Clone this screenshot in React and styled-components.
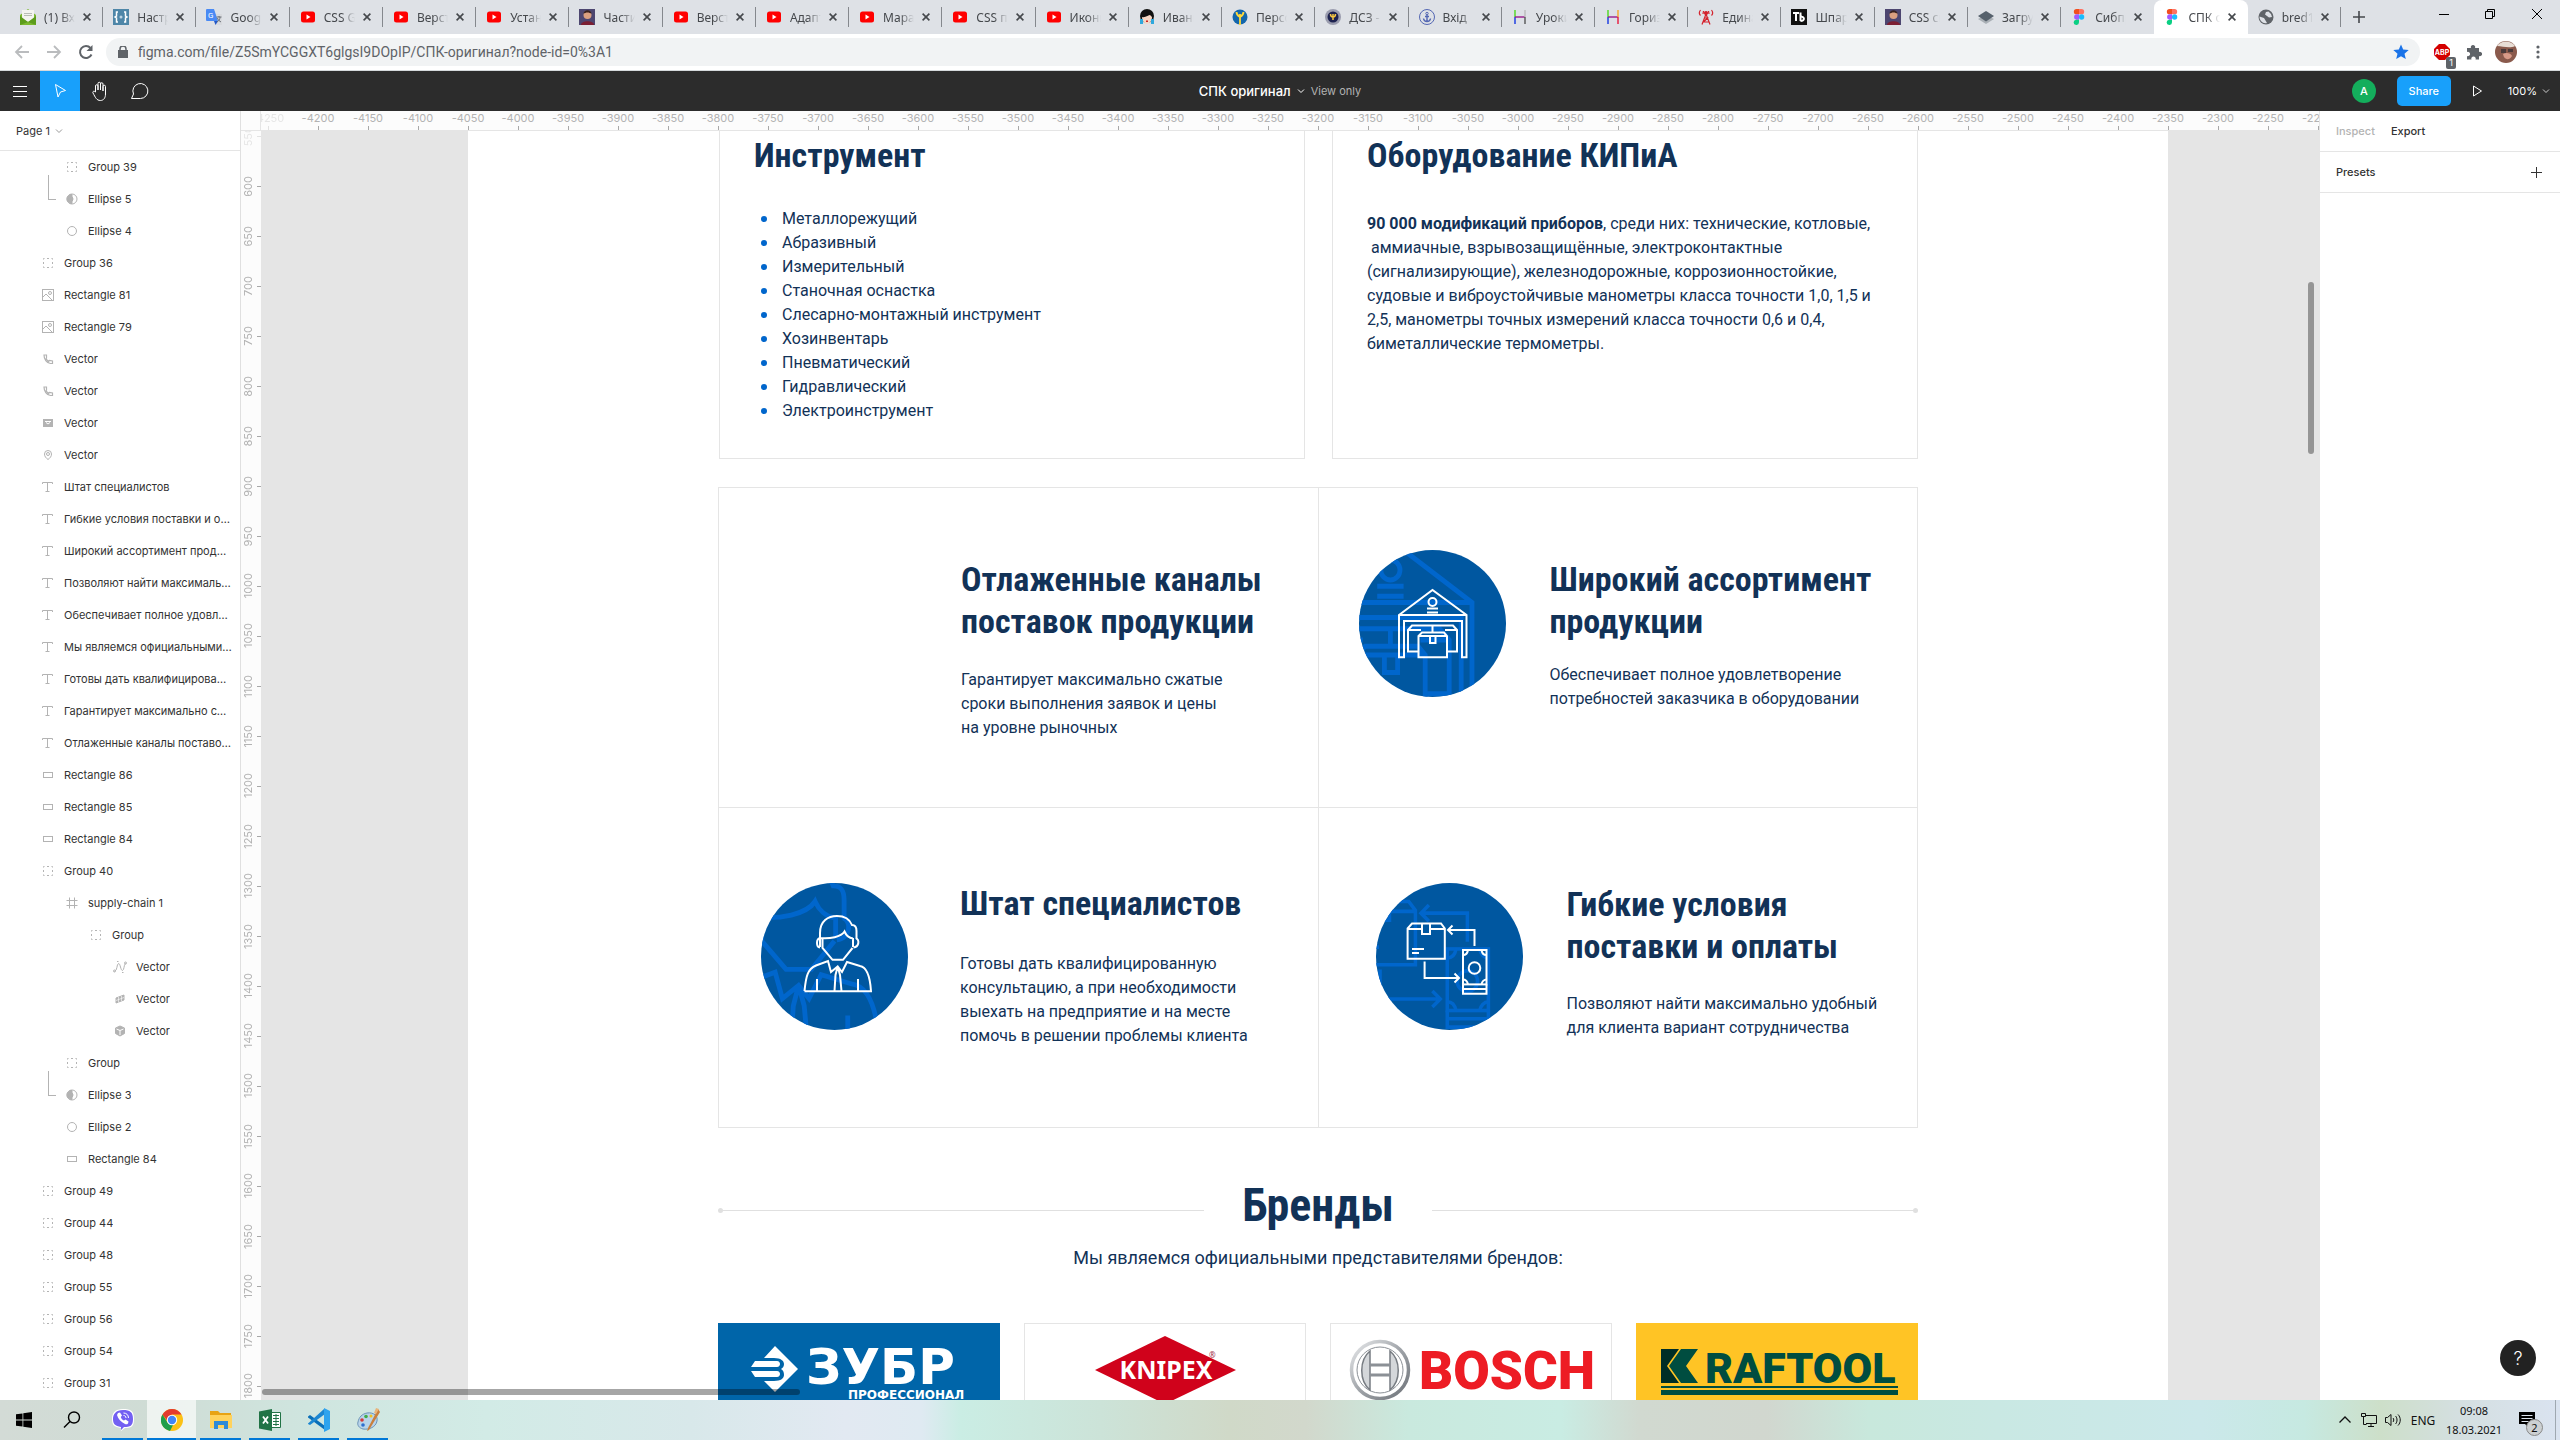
import React from "react";
import styled, { createGlobalStyle, css } from "styled-components";

const NAVY = "#123257";
const LINE = "#e5e5e5";

const Global = createGlobalStyle`
  *, *::before, *::after { box-sizing: border-box; }
  body { margin: 0; font-family: Inter, "Noto Sans", sans-serif; font-size: 11px; color: #333; background: #fff; }
  button { font: inherit; color: inherit; border: 0; padding: 0; background: none; }
  h1, h2, h3, p, ul { margin: 0; padding: 0; }
  a { color: inherit; text-decoration: none; }
  svg { display: block; flex: none; }
`;

const Page = styled.div`
  display: flex;
  flex-direction: column;
  height: 100vh;
  overflow: hidden;
`;

/* ---------- browser chrome ---------- */

const TabStrip = styled.header`
  display: flex;
  height: 34px;
  padding-left: 10px;
  background: #dee1e6;
  font-family: "Noto Sans", "Open Sans", sans-serif;
  font-size: 12px;
  color: #45484c;
`;

const TabList = styled.div`
  display: flex;
  flex: 1;
  min-width: 0;
`;

const Tab = styled.div`
  display: flex;
  align-items: center;
  flex: 1;
  min-width: 0;
  padding: 0 10px;
  position: relative;
  &::after {
    content: "";
    position: absolute;
    right: 0;
    top: 7px;
    height: 20px;
    width: 1px;
    background: ${(p) => (p.$divider ? "#85888d" : "transparent")};
  }
  ${(p) =>
    p.$active &&
    css`
      background: #fff;
      border-radius: 8px 8px 0 0;
    `}
`;

const TabTitle = styled.span`
  flex: 1;
  min-width: 0;
  margin: 0 6px 0 8px;
  overflow: hidden;
  white-space: nowrap;
  mask-image: linear-gradient(to right, #000 55%, transparent 100%);
`;

const IconButton = styled.button`
  display: grid;
  place-items: center;
  flex: none;
  width: ${(p) => p.$w || 32}px;
  height: ${(p) => p.$h || 32}px;
`;

const WindowButtons = styled.div`
  display: flex;
  margin-left: 44px;
`;

const AddressRow = styled.div`
  display: flex;
  align-items: center;
  height: 37px;
  padding: 0 6px;
  background: #fff;
  border-bottom: 1px solid #d5d9dc;
`;

const AddressBar = styled.div`
  display: flex;
  align-items: center;
  flex: 1;
  height: 28px;
  margin: 0 6px 0 4px;
  padding: 0 11px 0 12px;
  border-radius: 14px;
  background: #f1f3f4;
  gap: 10px;
`;

const Address = styled.input`
  flex: 1;
  border: 0;
  padding: 0;
  background: none;
  outline: none;
  font: 14px Roboto, "Noto Sans", sans-serif;
  color: #5f6368;
`;

const ExtensionBadge = styled.span`
  position: absolute;
  right: 2px;
  bottom: -1px;
  padding: 0 3px;
  border-radius: 2px;
  background: #5f6368;
  color: #fff;
  font-size: 9px;
  line-height: 12px;
`;

const Extension = styled(IconButton)`
  position: relative;
`;

/* ---------- editor toolbar ---------- */

const Toolbar = styled.div`
  display: grid;
  grid-template-columns: 1fr auto 1fr;
  align-items: center;
  height: 40px;
  background: #2c2c2c;
  color: #fff;
`;

const Tools = styled.div`
  display: flex;
`;

const Tool = styled(IconButton)`
  background: ${(p) => (p.$active ? "#18a0fb" : "none")};
`;

const FileTitle = styled.div`
  display: flex;
  align-items: center;
  gap: 6px;
  font-size: 13px;
  font-weight: 500;
  small {
    font-size: 11px;
    font-weight: 400;
    color: #b3b3b3;
  }
`;

const ToolbarEnd = styled.div`
  display: flex;
  align-items: center;
  justify-content: flex-end;
  padding-right: 10px;
`;

const Avatar = styled.span`
  width: 24px;
  height: 24px;
  margin-right: 21px;
  border-radius: 50%;
  background: #14ae5c;
  font-weight: 500;
  line-height: 24px;
  text-align: center;
`;

const ShareButton = styled.button`
  width: 54px;
  height: 30px;
  margin-right: 11px;
  border-radius: 5px;
  background: #18a0fb;
  font-weight: 500;
`;

const ZoomButton = styled.button`
  display: flex;
  align-items: center;
  gap: 5px;
  margin-left: 14px;
`;

/* ---------- side panels ---------- */

const Workspace = styled.div`
  display: flex;
  flex: 1;
  min-height: 0;
`;

const LeftPanel = styled.aside`
  flex: 0 0 241px;
  overflow: hidden;
  border-right: 1px solid #e0e0e0;
`;

const PanelRow = styled.div`
  display: flex;
  align-items: center;
  gap: 16px;
  height: ${(p) => p.$h || 40}px;
  padding: 0 16px;
  border-bottom: 1px solid ${LINE};
`;

const PageButton = styled.button`
  display: flex;
  align-items: center;
  gap: 5px;
`;

const PanelTab = styled.button`
  font-weight: 500;
  color: ${(p) => (p.$muted ? "#b3b3b3" : "#333")};
`;

const Layer = styled.div`
  display: flex;
  align-items: center;
  gap: 8px;
  height: 32px;
  padding: 0 8px 0 ${(p) => 40 + p.$level * 24}px;
  position: relative;
  span {
    overflow: hidden;
    white-space: nowrap;
    text-overflow: ellipsis;
  }
  ${(p) =>
    p.$mask &&
    css`
      &::before {
        content: "";
        position: absolute;
        left: 48px;
        top: -8px;
        width: 8px;
        height: 25px;
        border: solid #b3b3b3;
        border-width: 0 0 1px 1px;
      }
    `}
`;

const RightPanel = styled.aside`
  flex: 0 0 241px;
  display: flex;
  flex-direction: column;
  border-left: 1px solid ${LINE};
  ${PanelRow} h2 {
    flex: 1;
    font-size: 11px;
    font-weight: 500;
  }
`;

const HelpButton = styled.button`
  width: 36px;
  height: 36px;
  margin: auto 24px 24px auto;
  border-radius: 50%;
  background: #222;
  color: #fff;
  font-size: 18px;
  font-weight: 300;
`;

/* ---------- canvas ---------- */

const CanvasColumn = styled.div`
  flex: 1;
  min-width: 0;
  display: grid;
  grid-template: 20px 1fr / 20px 1fr;
`;

const RulerCorner = styled.div`
  background: #fcfcfc;
  border: solid ${LINE};
  border-width: 0 1px 1px 0;
`;

const RulerX = styled.div`
  display: flex;
  overflow: hidden;
  background: #fcfcfc;
  border-bottom: 1px solid ${LINE};
  &::before { content: ""; flex: 0 0 auto; margin-left: -18px; }
`;

const RulerY = styled.div`
  display: flex;
  flex-direction: column;
  overflow: hidden;
  background: #fcfcfc;
  &::before { content: ""; flex: none; margin-top: -20px; }
`;

const MarkX = styled.div`
  flex: 0 0 50px;
  display: flex;
  flex-direction: column;
  align-items: center;
  justify-content: space-between;
  color: #b3b3b3;
  line-height: 15px;
  opacity: ${(p) => (p.$faded ? 0.3 : 1)};
  &::after { content: ""; width: 1px; height: 4px; background: #a8a8a8; }
`;

const MarkY = styled.div`
  flex: 0 0 50px;
  display: flex;
  align-items: center;
  justify-content: space-between;
  color: #b3b3b3;
  opacity: ${(p) => (p.$faded ? 0.3 : 1)};
  span { writing-mode: vertical-rl; transform: rotate(180deg); line-height: 15px; }
  &::after { content: ""; width: 4px; height: 1px; background: #a8a8a8; }
`;

const Canvas = styled.main`
  position: relative;
  overflow: hidden;
  background: #e5e5e5;
`;

const Artboard = styled.div`
  height: 100%;
  margin: 0 151px 0 207px;
  overflow: hidden;
  background: #fff;
  color: ${NAVY};
  font: 16px/24px Roboto, sans-serif;
`;

const Content = styled.div`
  width: 1200px;
  max-width: 100%;
  margin: 0 auto;
`;

const ScrollThumb = styled.div`
  position: absolute;
  border-radius: 3px;
  background: rgba(0, 0, 0, 0.35);
  ${(p) =>
    p.$vertical
      ? css`right: 5px; top: 151px; width: 6px; height: 172px;`
      : css`left: 1px; bottom: 5px; height: 6px; width: 538px;`}
`;

const Heading = styled.h3`
  font-family: "Roboto Condensed", "Liberation Sans Narrow", sans-serif;
  font-size: 34px;
  line-height: ${(p) => p.$lh || 42}px;
  font-weight: 700;
  white-space: nowrap;
`;

const CatalogRow = styled.section`
  display: grid;
  grid-template-columns: 1fr 1fr;
  gap: 27px;
  padding-left: 1px;
`;

const CatalogCard = styled.article`
  height: 328px;
  padding: 0 32px 0 34px;
  border: solid ${LINE};
  border-width: 0 1px 1px;
`;

const BulletList = styled.ul`
  margin: 28px 0 0 7px;
  list-style: none;
  li { display: flex; align-items: center; gap: 15px; }
  li::before { content: ""; width: 6px; height: 6px; border-radius: 50%; background: #0066cc; }
`;

const CardText = styled.p`
  margin-top: 33px;
  white-space: nowrap;
`;

const Features = styled.section`
  display: grid;
  grid-template-columns: 1fr 1fr;
  margin-top: 28px;
  border: solid ${LINE};
  border-width: 1px 0 0 1px;
`;

const Feature = styled.article`
  display: flex;
  align-items: flex-start;
  gap: ${(p) => p.$gap}px;
  height: 320px;
  padding: ${(p) => p.$top}px 0 0 ${(p) => p.$left}px;
  border: solid ${LINE};
  border-width: 0 1px 1px 0;
`;

const FeatureText = styled.div`
  padding-top: ${(p) => p.$top}px;
  white-space: nowrap;
  p { margin-top: ${(p) => p.$gap}px; }
`;

const Emblem = styled.div`
  flex: 0 0 147px;
  height: 147px;
`;

const BrandsHead = styled.div`
  display: flex;
  align-items: center;
  gap: 38px;
  margin-top: 41px;
`;

const BrandsTitle = styled(Heading)`
  font-size: 46px;
  line-height: 72px;
`;

const Rule = styled.div`
  flex: 1;
  display: flex;
  align-items: center;
  flex-direction: ${(p) => (p.$end ? "row-reverse" : "row")};
  margin-top: 10px;
  &::before { content: ""; width: 5px; height: 5px; border-radius: 50%; background: #e0e0e0; }
  &::after { content: ""; flex: 1; height: 1px; background: #e0e0e0; }
`;

const BrandsNote = styled.p`
  margin-top: 3px;
  font-size: 18px;
  line-height: 27px;
  text-align: center;
`;

const BrandRow = styled.div`
  display: grid;
  grid-template-columns: repeat(4, 1fr);
  gap: 24px;
  margin-top: 52px;
`;

const Brand = styled.div`
  height: 140px;
  background: ${(p) => p.$bg || "#fff"};
  border: 1px solid ${(p) => p.$bg || LINE};
`;

/* ---------- taskbar ---------- */

const Taskbar = styled.footer`
  display: flex;
  height: 40px;
  background: linear-gradient(to right,
    #d3dbd6 0%, #cfdcd5 6%, #cfe5df 12%, #d2ebe6 19%, #d8e8ea 27%, #e2e9f2 33%, #dfeaf2 36%, #caede4 37.5%,
    #cce3d8 43%, #d0d9c8 48%, #d2d8cc 51%, #c9e9de 55%, #c9ece3 61%, #d1d9d0 64%, #d1d7cf 69%, #c8e8dc 73%,
    #c9e8e3 78%, #cbe8ea 86%, #c6e9e1 90%, #cddfc9 93%, #d4dfe0 96%, #dae3f0 100%);
  color: #111;
  font-family: "Noto Sans", "Open Sans", sans-serif;
  font-size: 12px;
`;

const TaskButton = styled.button`
  display: grid;
  place-items: center;
  width: ${(p) => (p.$running ? 49 : 48)}px;
  height: 40px;
  position: relative;
  background: ${(p) => (p.$current ? "rgba(255,255,255,0.65)" : "none")};
  &::after {
    content: "";
    position: absolute;
    bottom: 0;
    left: ${(p) => (p.$current ? 0 : 4)}px;
    right: ${(p) => (p.$current ? 0 : 4)}px;
    height: 2px;
    background: ${(p) => (p.$running ? "#0078d7" : "transparent")};
  }
`;

const TaskGroup = styled.div`
  display: flex;
  padding-left: ${(p) => p.$pad || 0}px;
`;

const Tray = styled.div`
  display: flex;
  align-items: center;
  margin-left: auto;
`;

const Clock = styled.time`
  width: 66px;
  font-size: 11px;
  line-height: 19px;
  text-align: center;
  white-space: pre-line;
`;

const Notices = styled.button`
  position: relative;
  width: 38px;
  height: 40px;
  margin: 0 9px 0 1px;
  display: grid;
  place-items: center;
`;

const NoticeCount = styled.span`
  position: absolute;
  left: 18px;
  top: 19px;
  width: 17px;
  height: 17px;
  border: 1px solid #888;
  border-radius: 50%;
  background: #ccd0d2;
  font-size: 11px;
  line-height: 15px;
`;

const DesktopEdge = styled.div`
  width: 5px;
  height: 40px;
  border-left: 1px solid #9fa8b0;
`;

/* ---------- icons ---------- */

const Svg = ({ w = 16, h, vb, stroke = "currentColor", sw = 1, fill = "none", children }) => (
  <svg width={w} height={h || w} viewBox={vb || `0 0 ${w} ${h || w}`} stroke={stroke} strokeWidth={sw} fill={fill} aria-hidden="true">
    {children}
  </svg>
);

const Chevron = ({ color = "#999" }) => (
  <Svg w={8} stroke={color}><path d="M1 2.500 4 5.500 7 2.500" /></Svg>
);

const Cross = ({ size = 8, sw = 1.6 }) => (
  <Svg w={size} vb="0 0 8 8" sw={sw}><path d="M.6.6 7.400 7.400M7.400.6.6 7.400" /></Svg>
);

const FAVICONS = {
  mail: (
    <g stroke="none"><path fill="#7cb82f" d="M0 6 8 0l8 6v10H0z" /><path fill="#f4f4f0" d="M2 1h12v9l-6 3-6-3z" /><path fill="#b9bdb5" d="M4 4h8v1H4zM4 6h8v1H4z" /><path fill="#5d9c1c" d="M0 7l8 6-8 3zM16 7l-8 6 8 3z" /></g>
  ),
  code: (
    <g><rect width="16" height="16" fill="#4e86a8" stroke="none" /><path d="M5 3H3.500v4L2 8l1.500 1v4H5M11 3h1.500v4L14 8l-1.500 1v4H11" stroke="#fff" strokeWidth="1.500" fill="none" /><circle cx="8" cy="8" r="1.500" fill="#bcd4e4" stroke="none" /></g>
  ),
  translate: (
    <g stroke="none"><path fill="#d8dade" d="M7 5h9v11H9z" /><path fill="#4a8af4" d="M1 0h7l4 12H1a1 1 0 0 1-1-1V1a1 1 0 0 1 1-1z" /><path fill="#2358c7" d="M8 12h4l-2.500 4z" /><text x="2" y="9" fontSize="8" fill="#fff" fontFamily="Roboto">G</text><path stroke="#6a6f77" d="M10.500 8h5M13 7v1M11 13c2-1 3-3 3-5M11.500 9c.5 2 2 3 3.500 4" fill="none" /></g>
  ),
  youtube: (
    <g stroke="none"><rect x="1" y="2.500" width="14" height="11" rx="2.500" fill="#f00" /><path fill="#fff" d="M6.500 5.500v5l4-2.500z" /></g>
  ),
  portrait: (
    <g stroke="none"><rect width="16" height="16" fill="#4d4670" /><circle cx="8.500" cy="6" r="4" fill="#dba080" /><path fill="#3a2320" d="M4.500 5c0-5 8-5 8 0-2-2-6-2-8 0z" /><path fill="#7c1f33" d="M2 16c0-5 13-5 13 0z" /></g>
  ),
  girl: (
    <g stroke="none"><circle cx="8" cy="7" r="7" fill="#111" /><path fill="#f6d6c4" d="M3 8c3 1 7-2 8-2l2 2c0 9-10 9-10 0z" /><path fill="#2fa8dd" d="M1 10h3v5H1zM12 10h3v5h-3z" /><rect x="7" y="11.500" width="2" height="1.500" fill="#c22" /></g>
  ),
  trident: (
    <g stroke="none"><circle cx="8" cy="8" r="7.500" fill="#1467ac" /><path stroke="#ffd93b" strokeWidth="1.800" fill="none" d="M4.500 3c0 3 1.500 4 3.500 5 2-1 3.500-2 3.500-5M8 5v11" /></g>
  ),
  seal: (
    <g stroke="none"><circle cx="8" cy="8" r="8" fill="#9a9cae" /><circle cx="8" cy="8" r="5.500" fill="#1d2250" /><path stroke="#f6c744" strokeWidth="1.500" fill="none" d="M5.500 5c0 2 1 3 2.500 3s2.500-1 2.500-3M8 5v6" /></g>
  ),
  anchor: (
    <g stroke="#5467b3" fill="none"><circle cx="8" cy="8" r="7.500" /><circle cx="8" cy="4.500" r="1.200" /><path strokeWidth="1.400" d="M8 6v7M6 7.500h4M4.500 9.500c.5 4 6.500 4 7 0" /></g>
  ),
  hgreen: (
    <g fill="none" strokeWidth="1.400"><path stroke="#4fd81d" d="M3 1v7" /><path stroke="#1435e0" d="M3 8v7" /><path stroke="#9a1b8c" d="M3 8h10" /><path stroke="#bbb" d="M13 1v7" /><path stroke="#555" d="M13 8v7" /></g>
  ),
  horange: (
    <g fill="none" strokeWidth="1.400"><path stroke="#4fd81d" d="M3 1v7" /><path stroke="#1435e0" d="M3 8v7" /><path stroke="#9a1b8c" d="M3 8h10" /><path stroke="#f6a623" d="M13 1v7" /><path stroke="#e8173c" d="M13 8v7" /></g>
  ),
  tower: (
    <g fill="none" stroke="#d4232e" strokeWidth="1.200"><path d="M8 5 4 15.500M8 5l4 10.500M6.500 9h3l-4 4h5M2.500 1C1 3 1 5 2.500 6.500M13.500 1c1.500 2 1.500 4 0 5.500M5.500 2l-.5 3M10.500 2l.5 3" /><circle cx="8" cy="4" r="1.500" fill="#d4232e" /></g>
  ),
  tb: (
    <g stroke="none"><rect width="16" height="16" fill="#111" /><path stroke="#fff" strokeWidth="2" fill="none" d="M2 4h6M5 4v8M9.500 3.500v8.500M9.500 8c4-1 5 4 0 4" /></g>
  ),
  stack: (
    <g stroke="none"><path fill="#aab0b6" d="m0 10 8 5 8-5-8-4z" /><path fill="#56616c" d="m0 7 8 5.500L16 7 8 2z" /></g>
  ),
  figma: (
    <g stroke="none"><path fill="#f24e1e" d="M8 0H5.500a2.670 2.670 0 0 0 0 5.340H8z" /><path fill="#ff7262" d="M8 0h2.500a2.670 2.670 0 0 1 0 5.340H8z" /><path fill="#a259ff" d="M8 5.340H5.500a2.670 2.670 0 0 0 0 5.330H8z" /><circle cx="10.600" cy="8" r="2.670" fill="#1abcfe" /><path fill="#0acf83" d="M8 10.670H5.500A2.670 2.670 0 1 0 8 13.340z" /></g>
  ),
  globe: (
    <g stroke="none"><circle cx="8" cy="8" r="7.500" fill="#5f6368" /><path fill="#dee1e6" d="M1.500 7.500 6 9l1.500 2.500L9 14c-4 1-7.500-2-7.500-6.500zM8 3l2.500-.5L13 5l1 3-3 .5L9 7 7 5.500z" /></g>
  ),
};

const Favicon = ({ kind }) => <Svg w={16}>{FAVICONS[kind]}</Svg>;

const LAYER_ICONS = {
  group: <rect x="3.500" y="3.500" width="9" height="9" strokeDasharray="2 2.500" strokeDashoffset="1" />,
  mask: <g><circle cx="8" cy="8" r="5" /><path fill="#b3b3b3" d="M8 3.500a4.500 4.500 0 0 0-5 4.500 4.500 4.500 0 0 0 5 4.500z" /><circle cx="6.500" cy="8" r="2.500" fill="#b3b3b3" /></g>,
  ellipse: <circle cx="8" cy="8" r="4.500" />,
  image: <g><rect x="2.500" y="2.500" width="11" height="11" /><circle cx="10" cy="6" r="1.500" /><path d="m3 10 3-3 6.500 6.500" /></g>,
  phone: <path strokeWidth="1.200" d="M4 4h2.500v3L6 8l2.500 2.500 1-1 3 .5v2.500h-2C6.500 12 4 8 4 4z" />,
  envelope: <g><rect x="3.500" y="4.500" width="9" height="7" fill="#b3b3b3" /><path stroke="#fff" d="M5 6.500h6M6 7.500l2 1.500 2-1.500" /></g>,
  pin: <g><path d="M8 12.500C6 11 4.500 9.500 4.500 7a3.500 3.500 0 0 1 7 0c0 2.500-1.500 4-3.500 5.500z" /><circle cx="8" cy="7" r="1.500" /></g>,
  text: <path d="M2.500 5V3.500h10V5M7.500 3.500v9M5.500 12.500h4" />,
  rect: <rect x="3.500" y="5.500" width="9" height="5" />,
  frame: <path d="M5.500 2.500v11M10.500 2.500v11M2.500 5.500h11M2.500 10.500h11" />,
  curve: <g><path d="M2.500 12.500c3-1 2-7 4-8 2 0 2 7 4 7 2-1 1-5 3-7" /><circle cx="2.500" cy="12" r="1" /><circle cx="13.500" cy="4" r="1" /><path d="M5 2.500h1.500M10 13.500h1.500" /></g>,
  tiles: <g><path fill="#b3b3b3" d="m4 7 8-3v5l-8 3z" /><path stroke="#fff" strokeWidth=".6" d="m4 9.500 8-3M6.500 6v5.500M9.500 5v5" /></g>,
  cube: <g><path fill="#b3b3b3" d="m8 3 4.500 2v5.500L8 13l-4.500-2.500V5z" /><path stroke="#fff" d="m4.500 6 3.500 1.500L11.500 6M8 7.500V12" /></g>,
};

const LayerIcon = ({ kind }) => <Svg w={16} stroke="#b3b3b3">{LAYER_ICONS[kind]}</Svg>;

const WarehouseArt = () => (
  <g>
    <path d="M40 65 73.500 40 107.500 65V107.300H103V71H45V107.300H40ZM40 65H107.500M45 71H103" />
    <circle cx="73.500" cy="52" r="4" />
    <path d="M68 58.500H79M68 62.500H79" />
    <path d="M59 101.500H49V80L53 75.500H94L98 80V101.500H88M49 80H62M86 80H98M73.500 75.500V82" />
    <path d="M59.500 86 63 82.500H85L88 86V107.300H59.500ZM59.500 86H88M71 86V93H76.500V86" />
  </g>
);

const PersonArt = () => (
  <g>
    <path d="M59 64V50C59 38 67 33 76 33 84 33 89 37 91 42 95 42 95.500 45 95.500 48V56M59 55C69 56 80 54 83.500 48.500 85 52 88 55 92 55.500M92 55V64" />
    <path d="M59 55C55 56 55 64 59 64.500M95 55.500C98.500 56 98.500 64 92.500 64.500M61.500 55V65L71.500 76.800H82L91.500 65" />
    <path d="M43.500 108.200H110C109 92 105 84 99 83L86 79 81 89 76.700 83.500 70 89 67 78 55 82.500C47 86 45 92 43.500 108.200M56 96V108M97 96V108M76.700 83.500 79 92 80.500 108M76.700 83.500 74.500 92 73.500 108" />
  </g>
);

const ExchangeArt = () => (
  <g>
    <path d="M31.600 45.500 36 40.500H65L68.800 45.500V75.800H31.600ZM46 41V51H54V41M31.600 46H46M54 46H68.800M36 66H48M36 70H43" />
    <path d="M98.500 63V47H72M76.500 42.500 72 47 76.500 51.500M48.600 78.500V95H83M78.500 90.500 83 95 78.500 99.500" />
    <rect x="87" y="67" width="23.500" height="34.400" />
    <circle cx="98.500" cy="85" r="5.800" />
    <path d="M87 72C90 72 91.500 70 92 67M105.500 67C106 70 108 72 110.500 72M87 96.500C90 96.500 91.500 99 92 101.400M105.500 101.400C106 99 108 96.500 110.500 96.500M87 101.400V110.700H110.500V101.400M87 106H110.500" />
  </g>
);

const EmblemArt = ({ id, Art, shift }) => (
  <Emblem>
    <Svg w={147} stroke="#fff" sw={2}>
      <clipPath id={id}><circle cx="73.500" cy="73.500" r="73.500" /></clipPath>
      <g clipPath={`url(#${id})`}>
        <rect width="147" height="147" fill="#0057a0" stroke="none" />
        <g transform={shift} stroke="#0066cc"><Art /></g>
      </g>
      <Art />
    </Svg>
  </Emblem>
);

const ZubrLogo = () => (
  <Svg w={280} h={100} stroke="none" fill="#fff">
    <path d="M45 34 56 22 79 45 56 68 45 57H55C62 57 65 54 65 51 65 48 64 46 62 45 64 44 65 42 65 40 65 37 62 34 55 34Z" />
    <path d="M36 37H58C62 37 62 43 58 43H32ZM32 47H58C62 47 62 53 58 53H36Z" />
    <text x="87" y="60" fontSize="50" fontWeight="700" fontFamily="DejaVu Sans">ЗУБР</text>
    <text x="129" y="75" fontSize="12" fontWeight="700" fontFamily="DejaVu Sans">ПРОФЕССИОНАЛ</text>
  </Svg>
);

const KnipexLogo = () => (
  <Svg w={280} h={100} stroke="none" fill="#d0021b">
    <path d="M70 46 140 12 211 46 140 80Z" />
    <text x="141" y="55" fontSize="25" fontWeight="700" fontFamily="Noto Sans" textAnchor="middle" fill="#fff">KNIPEX</text>
    <text x="184" y="34" fontSize="8" fontFamily="Noto Sans" fill="#a0304a">®</text>
  </Svg>
);

const BoschLogo = () => (
  <Svg w={280} h={100} stroke="none">
    <linearGradient id="steel" x1="0" y1="0" x2="1" y2="1">
      <stop offset="0" stopColor="#e8eaec" /><stop offset="0.500" stopColor="#9fa3a8" /><stop offset="1" stopColor="#6d7278" />
    </linearGradient>
    <circle cx="49" cy="46" r="28.500" stroke="url(#steel)" strokeWidth="3.500" />
    <circle cx="49" cy="46" r="23" stroke="#8b9096" />
    <path d="M39 27C28 36 28 57 39 66ZM59 27C70 36 70 57 59 66Z" fill="#d4d7da" stroke="#777c82" strokeWidth="1.500" />
    <path d="M39 41H59M39 51H59" stroke="#8b9096" strokeWidth="3" />
    <text x="88" y="65" fontSize="53" fontWeight="900" fontFamily="Roboto" fill="#ed1c24">BOSCH</text>
  </Svg>
);

const KraftoolLogo = () => (
  <Svg w={280} h={100} stroke="none" fill="#004d40">
    <path fill="#002e26" d="M24 25H42L30 42 42 59H24Z" />
    <path d="M44 25H61L49 42 61 59H44L32 42Z" />
    <text x="68" y="59" fontSize="43" fontWeight="900" fontFamily="Roboto">RAFTOOL</text>
    <path d="M24 62H261V64H24ZM24 66H261V71H24Z" />
  </Svg>
);

/* ---------- data ---------- */

const TABS = [
  ["mail", "(1) Вхідні"], ["code", "Настройка"], ["translate", "Google Пер"], ["youtube", "CSS Grid"],
  ["youtube", "Верстка"], ["youtube", "Установка"], ["portrait", "Частичная"], ["youtube", "Верстка"],
  ["youtube", "Адаптив"], ["youtube", "Марафон"], ["youtube", "CSS пере"], ["youtube", "Иконки"],
  ["girl", "Иванна"], ["trident", "Персона"], ["seal", "ДСЗ - Де"], ["anchor", "Вхід"],
  ["hgreen", "Уроки"], ["horange", "Горизонт"], ["tower", "Единая"], ["tb", "Шпаргал"],
  ["portrait", "CSS спра"], ["stack", "Загрузка"], ["figma", "Сибпром"], ["figma", "СПК ори"], ["globe", "bred1.ht"],
];
const ACTIVE_TAB = 23;

const LAYERS = [
  ["group", 1, "Group 39"], ["mask", 1, "Ellipse 5"], ["ellipse", 1, "Ellipse 4"], ["group", 0, "Group 36"],
  ["image", 0, "Rectangle 81"], ["image", 0, "Rectangle 79"], ["phone", 0, "Vector"], ["phone", 0, "Vector"],
  ["envelope", 0, "Vector"], ["pin", 0, "Vector"], ["text", 0, "Штат специалистов"],
  ["text", 0, "Гибкие условия поставки и оплаты"], ["text", 0, "Широкий ассортимент продукции"],
  ["text", 0, "Позволяют найти максимально удобный"], ["text", 0, "Обеспечивает полное удовлетворение"],
  ["text", 0, "Мы являемся официальными представителями"], ["text", 0, "Готовы дать квалифицированную"],
  ["text", 0, "Гарантирует максимально сжатые"], ["text", 0, "Отлаженные каналы поставок продукции"],
  ["rect", 0, "Rectangle 86"], ["rect", 0, "Rectangle 85"], ["rect", 0, "Rectangle 84"], ["group", 0, "Group 40"],
  ["frame", 1, "supply-chain 1"], ["group", 2, "Group"], ["curve", 3, "Vector"], ["tiles", 3, "Vector"],
  ["cube", 3, "Vector"], ["group", 1, "Group"], ["mask", 1, "Ellipse 3"], ["ellipse", 1, "Ellipse 2"],
  ["rect", 1, "Rectangle 84"], ["group", 0, "Group 49"], ["group", 0, "Group 44"], ["group", 0, "Group 48"],
  ["group", 0, "Group 55"], ["group", 0, "Group 56"], ["group", 0, "Group 54"], ["group", 0, "Group 31"],
];

const TOOL_TYPES = [
  "Металлорежущий", "Абразивный", "Измерительный", "Станочная оснастка", "Слесарно-монтажный инструмент",
  "Хозинвентарь", "Пневматический", "Гидравлический", "Электроинструмент",
];

const range = (from, count) => Array.from({ length: count }, (_, i) => from + i * 50);

/* ---------- app ---------- */

const Browser = () => (
  <>
    <TabStrip>
      <TabList>
        {TABS.map(([icon, title], i) => (
          <Tab key={i} $active={i === ACTIVE_TAB} $divider={i !== ACTIVE_TAB && i !== ACTIVE_TAB - 1}>
            <Favicon kind={icon} />
            <TabTitle>{title}</TabTitle>
            <IconButton $w={12} $h={16} aria-label="Закрыть"><Cross /></IconButton>
          </Tab>
        ))}
      </TabList>
      <IconButton $w={36} $h={34} aria-label="Новая вкладка"><Svg w={12} sw={1.6}><path d="M6 0v12M0 6h12" /></Svg></IconButton>
      <WindowButtons>
        <IconButton $w={46} $h={28} aria-label="Свернуть"><Svg w={10} stroke="#000"><path d="M0 5.500h10" /></Svg></IconButton>
        <IconButton $w={46} $h={28} aria-label="Окно"><Svg w={10} stroke="#000"><path d="M.5 2.500h7v7h-7zM2.500 2.500v-2h7v7h-2" /></Svg></IconButton>
        <IconButton $w={47} $h={28} aria-label="Закрыть окно"><Svg w={10} stroke="#000"><path d="m0 0 10 10M10 0 0 10" /></Svg></IconButton>
      </WindowButtons>
    </TabStrip>
    <AddressRow>
      <IconButton aria-label="Назад"><Svg w={16} stroke="#babcbe" sw={1.8}><path d="M15 8H2M8 2 2 8l6 6" /></Svg></IconButton>
      <IconButton aria-label="Вперёд"><Svg w={16} stroke="#babcbe" sw={1.8}><path d="M1 8h13M8 2l6 6-6 6" /></Svg></IconButton>
      <IconButton aria-label="Обновить"><Svg w={16} stroke="#5f6368" sw={2}><path d="M13.500 10.500A6 6 0 1 1 12.500 4" /><path d="M14.500 1v6h-6z" fill="#5f6368" stroke="none" /></Svg></IconButton>
      <AddressBar>
        <Svg w={10} h={12} stroke="none" fill="#5f6368"><path d="M0 4h10v8H0z" /><path d="M2 5V3a3 3 0 0 1 6 0v2" stroke="#5f6368" strokeWidth="1.500" fill="none" /></Svg>
        <Address aria-label="Адрес" readOnly value="figma.com/file/Z5SmYCGGXT6glgsI9DOpIP/СПК-оригинал?node-id=0%3A1" />
        <Svg w={16} stroke="none" fill="#1a73e8"><path d="m8 .5 2.200 5.100 5.500.5-4.200 3.600 1.300 5.400L8 12.200l-4.800 2.900 1.300-5.400L.3 6.100l5.500-.5z" /></Svg>
      </AddressBar>
      <Extension aria-label="AdBlock">
        <Svg w={16} stroke="none" fill="#d40000"><path d="M5 0h6l5 5v6l-5 5H5l-5-5V5z" /><text x="8" y="11" fontSize="7" fontWeight="700" fill="#fff" textAnchor="middle">ABP</text></Svg>
        <ExtensionBadge>1</ExtensionBadge>
      </Extension>
      <IconButton aria-label="Расширения"><Svg w={16} stroke="none" fill="#5f6368"><path d="M1 4h4a2.200 2.200 0 1 1 4 0h4v4a2.200 2.200 0 1 1 0 4v3.500H9.500a2.200 2.200 0 1 0-4 0H1V12a2.200 2.200 0 1 0 0-4z" /></Svg></IconButton>
      <IconButton aria-label="Профиль"><Svg w={22} stroke="none"><circle cx="11" cy="11" r="11" fill="#8a5a4c" /><path fill="#e8ded6" d="M2 5c4-6 14-6 18 0-6 3-12 0-18 0z" /><path fill="#4a3a3a" d="M6 8h5v4H6zM13 8h5v3h-5z" /><path fill="#d89a88" d="M8 13c3-2 8-1 9 2-3 5-8 4-9-2z" /></Svg></IconButton>
      <IconButton aria-label="Меню"><Svg w={16} stroke="none" fill="#5f6368"><circle cx="8" cy="3" r="1.600" /><circle cx="8" cy="8" r="1.600" /><circle cx="8" cy="13" r="1.600" /></Svg></IconButton>
    </AddressRow>
  </>
);

const EditorToolbar = () => (
  <Toolbar>
    <Tools>
      <Tool $w={40} $h={40} aria-label="Главное меню"><Svg w={16}><path d="M1 3.500h14M1 8.500h14M1 13.500h14" /></Svg></Tool>
      <Tool $w={40} $h={40} $active aria-label="Выбор"><Svg w={16}><path d="m3.500 1.500 10 6-5 1.500-2.500 5z" /></Svg></Tool>
      <Tool $w={40} $h={40} aria-label="Рука"><Svg w={20}><path d="M5.500 11V5a1.200 1.200 0 0 1 2.500 0v4V2.500a1.200 1.200 0 0 1 2.500 0V9 3a1.200 1.200 0 0 1 2.500 0v7-4.500a1.200 1.200 0 0 1 2.500 0V13c0 4-2 6.500-5 6.500-4 0-5-3-7.500-7.500-.8-1.500 1-2.500 2.500-1z" /></Svg></Tool>
      <Tool $w={40} $h={40} aria-label="Комментарий"><Svg w={20}><path d="M1.500 17.500h9a7.500 7.500 0 1 0-7-4.500z" /></Svg></Tool>
    </Tools>
    <FileTitle>СПК оригинал <Chevron color="#fff" /> <small>View only</small></FileTitle>
    <ToolbarEnd>
      <Avatar>A</Avatar>
      <ShareButton>Share</ShareButton>
      <IconButton aria-label="Просмотр"><Svg w={12}><path d="M1.500 1v10l8-5z" /></Svg></IconButton>
      <ZoomButton>100% <Chevron color="#ccc" /></ZoomButton>
    </ToolbarEnd>
  </Toolbar>
);

const Site = () => (
  <Artboard>
    <Content>
      <CatalogRow>
        <CatalogCard>
          <Heading $lh={48}>Инструмент</Heading>
          <BulletList>{TOOL_TYPES.map((t) => <li key={t}>{t}</li>)}</BulletList>
        </CatalogCard>
        <CatalogCard>
          <Heading $lh={48}>Оборудование КИПиА</Heading>
          <CardText>
            <b>90 000 модификаций приборов</b>, среди них: технические, котловые,<br />
            &nbsp;аммиачные, взрывозащищённые, электроконтактные<br />
            (сигнализирующие), железнодорожные, коррозионностойкие,<br />
            судовые и виброустойчивые манометры класса точности 1,0, 1,5 и<br />
            2,5, манометры точных измерений класса точности 0,6 и 0,4,<br />
            биметаллические термометры.
          </CardText>
        </CatalogCard>
      </CatalogRow>
      <Features>
        <Feature $left={42} $gap={53} $top={62}>
          <Emblem />
          <FeatureText $top={8} $gap={26}>
            <Heading>Отлаженные каналы<br />поставок продукции</Heading>
            <p>Гарантирует максимально сжатые<br />сроки выполнения заявок и цены<br />на уровне рыночных</p>
          </FeatureText>
        </Feature>
        <Feature $left={40} $gap={44} $top={62}>
          <EmblemArt id="warehouse" Art={WarehouseArt} shift="translate(-145 -110) scale(2.4 2.5)" />
          <FeatureText $top={8} $gap={21}>
            <Heading>Широкий ассортимент<br />продукции</Heading>
            <p>Обеспечивает полное удовлетворение<br />потребностей заказчика в оборудовании</p>
          </FeatureText>
        </Feature>
        <Feature $left={42} $gap={52} $top={75}>
          <EmblemArt id="person" Art={PersonArt} shift="translate(-148 -98) scale(2.42 2.4)" />
          <FeatureText $top={0} $gap={29}>
            <Heading $lh={40}>Штат специалистов</Heading>
            <p>Готовы дать квалифицированную<br />консультацию, а при необходимости<br />выехать на предприятие и на месте<br />помочь в решении проблемы клиента</p>
          </FeatureText>
        </Feature>
        <Feature $left={57} $gap={44} $top={75}>
          <EmblemArt id="exchange" Art={ExchangeArt} shift="translate(-81 -54) scale(1.75 1.79)" />
          <FeatureText $top={0} $gap={25}>
            <Heading>Гибкие условия<br />поставки и оплаты</Heading>
            <p>Позволяют найти максимально удобный<br />для клиента вариант сотрудничества</p>
          </FeatureText>
        </Feature>
      </Features>
      <BrandsHead>
        <Rule />
        <BrandsTitle as="h2">Бренды</BrandsTitle>
        <Rule $end />
      </BrandsHead>
      <BrandsNote>Мы являемся официальными представителями брендов:</BrandsNote>
      <BrandRow>
        <Brand $bg="#0065a9"><ZubrLogo /></Brand>
        <Brand><KnipexLogo /></Brand>
        <Brand><BoschLogo /></Brand>
        <Brand $bg="#ffc425"><KraftoolLogo /></Brand>
      </BrandRow>
    </Content>
  </Artboard>
);

const TaskIcons = {
  windows: <Svg w={16} stroke="none" fill="#000"><path d="M0 2.300 6.500 1.400V7.600H0zM7.300 1.300 16 0V7.600H7.300zM0 8.400H6.500V14.600L0 13.700zM7.300 8.400H16V16L7.300 14.700z" /></Svg>,
  search: <Svg w={18} stroke="#000" sw={1.4}><circle cx="11" cy="6.500" r="5.500" /><path d="M7 10.500 1 16.500" /></Svg>,
  viber: <Svg w={22} stroke="none"><path fill="#fff" d="M11 0c8 0 11 2 11 10s-3 9-9 9l-4 3v-3C2 18 0 16 0 10S3 0 11 0z" /><path fill="#7360f2" d="M11 1c7 0 10 2 10 9s-3 8-9 8l-3 3v-3C3 17 1 15 1 10S4 1 11 1z" /><path fill="#fff" d="M6 4l2-.500 2 3-1.200 1.500c.5 2 1.700 3 3.200 3.500l1.500-1 3 2-.5 2c-1 1-2 1-3 .5C9 13 6 10 5 6z" /><path stroke="#fff" fill="none" d="M11.500 4c3 0 5 2 5 5M11.500 6.500c1.500 0 2.500 1 2.500 2.500" /></Svg>,
  chrome: <Svg w={22} stroke="none"><circle cx="11" cy="11" r="11" fill="#fbc116" /><path fill="#e33b2e" d="M1.500 5.500A11 11 0 0 1 20.500 5.500H11L6.500 12z" /><path fill="#1e9e4a" d="M1.500 5.500 6.500 13.500 11 16l1 0-3 6A11 11 0 0 1 1.500 5.500z" /><circle cx="11" cy="11" r="5.200" fill="#fff" /><circle cx="11" cy="11" r="4.200" fill="#4286f5" /></Svg>,
  folder: <Svg w={22} h={20} stroke="none"><path fill="#e8a314" d="M0 1h8l2 2h11v4H0z" /><path fill="#ffd25c" d="M0 5h22v13H0z" /><path fill="#2f8ad8" d="M4 11h14v8h-4v-4H8v4H4z" /></Svg>,
  excel: <Svg w={22} h={22} stroke="none"><path fill="#fff" stroke="#217346" d="M12.500 3.500h9v15h-9z" /><path stroke="#217346" d="M14 6.500h6M14 9.500h6M14 12.500h6M14 15.500h6M17 5v12" /><path fill="#217346" d="m0 2.500 13-2.500v22L0 19.500z" /><path stroke="#fff" strokeWidth="1.800" d="m4 7.500 5 7M9 7.500l-5 7" /></Svg>,
  vscode: <Svg w={24} stroke="none"><path fill="#0a6fb8" d="m1 8.500 2-1.500L18 18v4L1 9.500z" /><path fill="#1b86d2" d="M1 15.500 17 1l1 5L3 17l-2-1z" /><path fill="#2ea3ee" d="m17 0 6 3v18l-6 3z" /></Svg>,
  paint: <Svg w={24} stroke="none"><path fill="#b8d4ea" stroke="#6b93b8" d="M11 5c7-1 11 3 10 8-1 6-8 9-14 8-4-1-6-4-5-7C3 9 6 6 11 5z" /><circle cx="6" cy="12" r="1.800" fill="#d43b3b" /><circle cx="10" cy="8.500" r="1.800" fill="#3fae49" /><circle cx="15" cy="8" r="1.500" fill="#f3c21b" /><circle cx="7" cy="17" r="1.800" fill="#2d6fd0" /><path fill="#c9803c" d="m22 1 2 3L13 22l-2 1 1-3z" /><path fill="#e8b47c" d="m20 0 3 1-3 5-2-1z" /></Svg>,
};

const Task = () => (
  <Taskbar>
    <TaskGroup>
      <TaskButton aria-label="Пуск">{TaskIcons.windows}</TaskButton>
      <TaskButton aria-label="Поиск">{TaskIcons.search}</TaskButton>
    </TaskGroup>
    <TaskGroup $pad={2}>
      {["viber", "chrome", "folder", "excel", "vscode", "paint"].map((name) => (
        <TaskButton key={name} $running $current={name === "chrome"} aria-label={name}>{TaskIcons[name]}</TaskButton>
      ))}
    </TaskGroup>
    <Tray>
      <IconButton $w={24} aria-label="Скрытые значки"><Svg w={12} sw={1.3}><path d="m.5 8.500 5.500-5.500 5.500 5.500" /></Svg></IconButton>
      <IconButton $w={24} aria-label="Сеть"><Svg w={16}><path d="M5 3.500h10.500v8H5M10 11.500v3M7 14.500h6M.5 1.500h4v3h-4zM2.500 4.500v8h3" /></Svg></IconButton>
      <IconButton $w={24} aria-label="Громкость"><Svg w={16}><path d="M.5 5.500h2L6 2.500v11l-3.500-3h-2zM8 6c1 1 1 3 0 4M10.500 4c2 2 2 6 0 8M13 2.500c3 3 3 8 0 11" /></Svg></IconButton>
      <IconButton $w={36}>ENG</IconButton>
      <Clock>{"09:08\n18.03.2021"}</Clock>
      <Notices aria-label="Уведомления">
        <Svg w={16} stroke="none" fill="#000"><path d="M0 0h16v12h-6v4l-4-4H0z" /><path stroke="#dde5ee" d="M2.500 3.500h11M2.500 6.500h11M2.500 9.500h7" /></Svg>
        <NoticeCount>2</NoticeCount>
      </Notices>
      <DesktopEdge />
    </Tray>
  </Taskbar>
);

export default function App() {
  return (
    <Page>
      <Global />
      <Browser />
      <EditorToolbar />
      <Workspace>
        <LeftPanel>
          <PanelRow><PageButton>Page 1 <Chevron /></PageButton></PanelRow>
          {LAYERS.map(([icon, level, name], i) => (
            <Layer key={i} $level={level} $mask={icon === "mask"}><LayerIcon kind={icon} /><span>{name}</span></Layer>
          ))}
        </LeftPanel>
        <CanvasColumn>
          <RulerCorner />
          <RulerX>{range(-4250, 42).map((n, i) => <MarkX key={n} $faded={i === 0}>{n}</MarkX>)}</RulerX>
          <RulerY>{range(550, 26).map((n, i) => <MarkY key={n} $faded={i === 0}><span>{n}</span></MarkY>)}</RulerY>
          <Canvas>
            <Site />
            <ScrollThumb />
            <ScrollThumb $vertical />
          </Canvas>
        </CanvasColumn>
        <RightPanel>
          <PanelRow $h={41}><PanelTab $muted>Inspect</PanelTab><PanelTab>Export</PanelTab></PanelRow>
          <PanelRow $h={41}>
            <h2>Presets</h2>
            <IconButton $w={16} $h={16} aria-label="Добавить"><Svg w={12} stroke="#333"><path d="M6.500 1v11M1 6.500h11" /></Svg></IconButton>
          </PanelRow>
          <HelpButton aria-label="Справка">?</HelpButton>
        </RightPanel>
      </Workspace>
      <Task />
    </Page>
  );
}
